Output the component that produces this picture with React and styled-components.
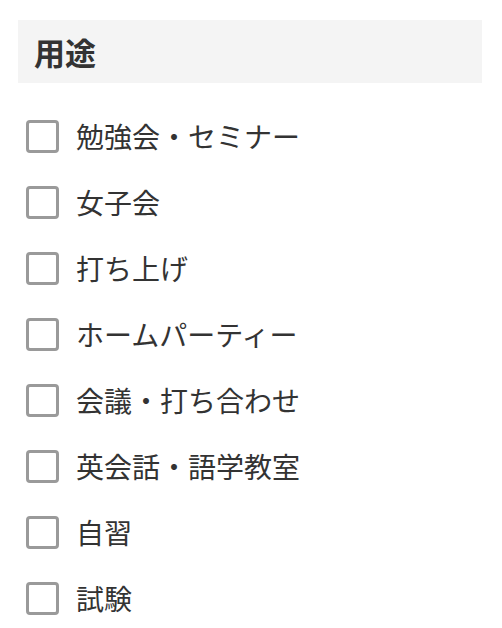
import React, { useState } from "react";
import styled, { createGlobalStyle } from "styled-components";

const GlobalStyle = createGlobalStyle`
  body {
    margin: 0;
    background: #fff;
    font-family: "Noto Sans CJK JP", "Noto Sans", sans-serif;
    color: #333;
  }
`;

const purposes = [
  "勉強会・セミナー",
  "女子会",
  "打ち上げ",
  "ホームパーティー",
  "会議・打ち合わせ",
  "英会話・語学教室",
  "自習",
  "試験",
];

const App = () => {
  const [checked, setChecked] = useState({});

  const toggle = (label) => {
    setChecked({ ...checked, [label]: !checked[label] });
  };

  return (
    <>
      <GlobalStyle />
      <Section>
        <Heading>用途</Heading>
        <List>
          {purposes.map((label) => (
            <Row key={label} onClick={() => toggle(label)}>
              <Box checked={!!checked[label]} />
              <Label>{label}</Label>
            </Row>
          ))}
        </List>
      </Section>
    </>
  );
};

export default App;

const Section = styled.section`
  padding: 20px 20px 0 18px;
`;

const Heading = styled.h2`
  margin: 0;
  height: 63px;
  display: flex;
  align-items: center;
  padding-left: 16px;
  background: #f4f4f4;
  font-size: 31px;
  font-weight: 700;
  color: #333;
`;

const List = styled.ul`
  list-style: none;
  margin: 0;
  padding: 20px 0 0 8px;
`;

const Row = styled.li`
  display: flex;
  align-items: center;
  height: 66px;
  gap: 17px;
  cursor: pointer;
`;

const Box = styled.span`
  width: 33px;
  height: 33px;
  box-sizing: border-box;
  border: 3px solid #9a9a9a;
  border-radius: 4px;
  background: ${(p) => (p.checked ? "#9a9a9a" : "#fff")};
  flex-shrink: 0;
`;

const Label = styled.span`
  font-size: 28px;
  line-height: 1;
  color: #333;
`;
